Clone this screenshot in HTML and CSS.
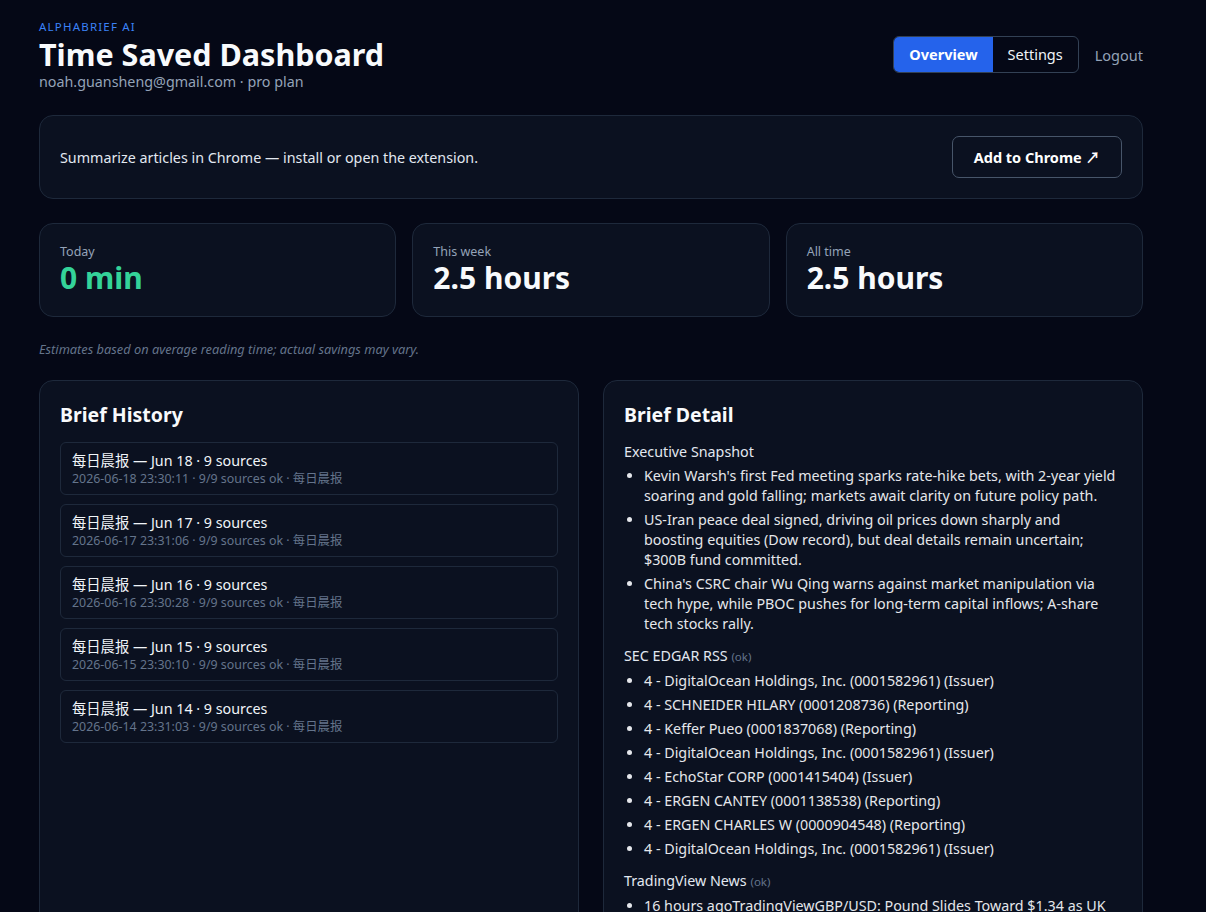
FILE: index.html
```html
<!DOCTYPE html>
<html lang="en">
<head>
<meta charset="utf-8">
<title>Time Saved Dashboard</title>
<link rel="stylesheet" href="styles.css">
</head>
<body>
<div class="page">
  <header class="topbar">
    <div class="brand">
      <div class="eyebrow">ALPHABRIEF AI</div>
      <h1 class="title">Time Saved Dashboard</h1>
      <div class="account">noah.guansheng@gmail.com · pro plan</div>
    </div>
    <nav class="nav">
      <div class="tabs">
        <span class="tab tab-active">Overview</span>
        <span class="tab">Settings</span>
      </div>
      <span class="logout">Logout</span>
    </nav>
  </header>

  <section class="card banner">
    <p class="banner-text">Summarize articles in Chrome — install or open the extension.</p>
    <span class="btn-outline">Add to Chrome ↗</span>
  </section>

  <section class="stats">
    <div class="card stat">
      <div class="stat-label">Today</div>
      <div class="stat-value green">0 min</div>
    </div>
    <div class="card stat">
      <div class="stat-label">This week</div>
      <div class="stat-value">2.5 hours</div>
    </div>
    <div class="card stat">
      <div class="stat-label">All time</div>
      <div class="stat-value">2.5 hours</div>
    </div>
  </section>

  <p class="note">Estimates based on average reading time; actual savings may vary.</p>

  <section class="panels">
    <div class="card panel">
      <h2 class="panel-title">Brief History</h2>
      <ul class="history">
        <li class="history-item">
          <div class="h-title">每日晨报 — Jun 18 · 9 sources</div>
          <div class="h-sub">2026-06-18 23:30:11 · 9/9 sources ok · 每日晨报</div>
        </li>
        <li class="history-item">
          <div class="h-title">每日晨报 — Jun 17 · 9 sources</div>
          <div class="h-sub">2026-06-17 23:31:06 · 9/9 sources ok · 每日晨报</div>
        </li>
        <li class="history-item">
          <div class="h-title">每日晨报 — Jun 16 · 9 sources</div>
          <div class="h-sub">2026-06-16 23:30:28 · 9/9 sources ok · 每日晨报</div>
        </li>
        <li class="history-item">
          <div class="h-title">每日晨报 — Jun 15 · 9 sources</div>
          <div class="h-sub">2026-06-15 23:30:10 · 9/9 sources ok · 每日晨报</div>
        </li>
        <li class="history-item">
          <div class="h-title">每日晨报 — Jun 14 · 9 sources</div>
          <div class="h-sub">2026-06-14 23:31:03 · 9/9 sources ok · 每日晨报</div>
        </li>
      </ul>
    </div>

    <div class="card panel">
      <h2 class="panel-title">Brief Detail</h2>
      <div class="section">
        <div class="sec-title">Executive Snapshot</div>
        <ul class="bullets">
          <li>Kevin Warsh's first Fed meeting sparks rate-hike bets, with 2-year yield soaring and gold falling; markets await clarity on future policy path.</li>
          <li>US-Iran peace deal signed, driving oil prices down sharply and boosting equities (Dow record), but deal details remain uncertain; $300B fund committed.</li>
          <li>China's CSRC chair Wu Qing warns against market manipulation via tech hype, while PBOC pushes for long-term capital inflows; A-share tech stocks rally.</li>
        </ul>
      </div>
      <div class="section">
        <div class="sec-title">SEC EDGAR RSS <span class="status">(ok)</span></div>
        <ul class="bullets">
          <li>4 - DigitalOcean Holdings, Inc. (0001582961) (Issuer)</li>
          <li>4 - SCHNEIDER HILARY (0001208736) (Reporting)</li>
          <li>4 - Keffer Pueo (0001837068) (Reporting)</li>
          <li>4 - DigitalOcean Holdings, Inc. (0001582961) (Issuer)</li>
          <li>4 - EchoStar CORP (0001415404) (Issuer)</li>
          <li>4 - ERGEN CANTEY (0001138538) (Reporting)</li>
          <li>4 - ERGEN CHARLES W (0000904548) (Reporting)</li>
          <li>4 - DigitalOcean Holdings, Inc. (0001582961) (Issuer)</li>
        </ul>
      </div>
      <div class="section">
        <div class="sec-title">TradingView News <span class="status">(ok)</span></div>
        <ul class="bullets">
          <li>16 hours agoTradingViewGBP/USD: Pound Slides Toward $1.34 as UK Inflation Cools and Rate-Cut Bets Build</li>
          <li>17 hours agoTradingViewEUR/USD: Euro Holds Steady as Traders Weigh ECB Signals</li>
        </ul>
      </div>
    </div>
  </section>
</div>
</body>
</html>
```

FILE: styles.css
```css
* { box-sizing: border-box; }
html, body { margin: 0; padding: 0; }
body {
  background: #050816;
  color: #e2e8f0;
  font-family: "Noto Sans", "Noto Sans CJK SC", sans-serif;
  font-size: 14.3px;
}
.page {
  width: 1104px;
  margin-left: 39px;
  padding-top: 19px;
  padding-bottom: 40px;
}
.topbar {
  display: flex;
  justify-content: space-between;
  align-items: flex-start;
}
.eyebrow {
  color: #3b82f6;
  font-size: 11.5px;
  letter-spacing: 1.2px;
  line-height: 16px;
}
.title {
  margin: 0;
  font-size: 30.5px;
  line-height: 38px;
  font-weight: 700;
  color: #f8fafc;
}
.account {
  color: #94a3b8;
  font-size: 14.3px;
  line-height: 18px;
}
.nav {
  display: flex;
  align-items: center;
  gap: 16px;
  margin-top: 17px;
}
.tabs {
  display: flex;
  border: 1px solid #334155;
  border-radius: 6px;
  overflow: hidden;
}
.tab {
  padding: 0 15px;
  line-height: 35px;
  font-size: 14.5px;
  color: #f1f5f9;
}
.tab-active {
  background: #2563eb;
  color: #fff;
  font-weight: 700;
}
.logout {
  color: #94a3b8;
  font-size: 14.5px;
}
.card {
  background: #0b1120;
  border: 1px solid #1e293b;
  border-radius: 14px;
}
.banner {
  margin-top: 24px;
  height: 84px;
  display: flex;
  align-items: center;
  justify-content: space-between;
  padding: 0 20px;
}
.banner-text {
  margin: 0;
  color: #e2e8f0;
}
.btn-outline {
  border: 1px solid #475569;
  border-radius: 7px;
  padding: 0 21px;
  line-height: 40px;
  font-weight: 700;
  font-size: 14.5px;
  color: #fff;
}
.stats {
  margin-top: 24px;
  display: grid;
  grid-template-columns: repeat(3, 1fr);
  gap: 16px;
}
.stat {
  height: 94px;
  padding: 19px 20px;
}
.stat-label {
  font-size: 12.5px;
  color: #94a3b8;
  line-height: 18px;
}
.stat-value {
  margin-top: 1px;
  font-size: 30px;
  font-weight: 700;
  line-height: 32px;
  color: #f8fafc;
}
.stat-value.green { color: #34d399; }
.note {
  margin: 24px 0 0;
  font-size: 12.8px;
  font-style: italic;
  color: #64748b;
  line-height: 16px;
}
.panels {
  margin-top: 23px;
  display: grid;
  grid-template-columns: 1fr 1fr;
  gap: 24px;
  align-items: stretch;
}
.panel {
  padding: 20px 20px 24px;
}
.panel-title {
  margin: 0 0 13px;
  font-size: 19.5px;
  line-height: 28px;
  font-weight: 700;
  color: #f8fafc;
}
.history {
  list-style: none;
  margin: 0;
  padding: 0;
  display: flex;
  flex-direction: column;
  gap: 9px;
}
.history-item {
  border: 1px solid #1e293b;
  border-radius: 6px;
  padding: 8px 11px;
  height: 53px;
}
.h-title {
  font-size: 14.3px;
  line-height: 20px;
  color: #f1f5f9;
}
.h-sub {
  font-size: 12.4px;
  line-height: 16px;
  color: #64748b;
}
.section { margin-bottom: 12px; }
.sec-title {
  font-size: 14.3px;
  line-height: 20px;
  color: #e2e8f0;
  margin-bottom: 4px;
}
.status {
  font-size: 11.5px;
  color: #64748b;
}
.bullets {
  margin: 0;
  padding-left: 20px;
}
.bullets li {
  font-size: 14.3px;
  line-height: 20px;
  color: #e5e7eb;
  margin-bottom: 4px;
}
```
